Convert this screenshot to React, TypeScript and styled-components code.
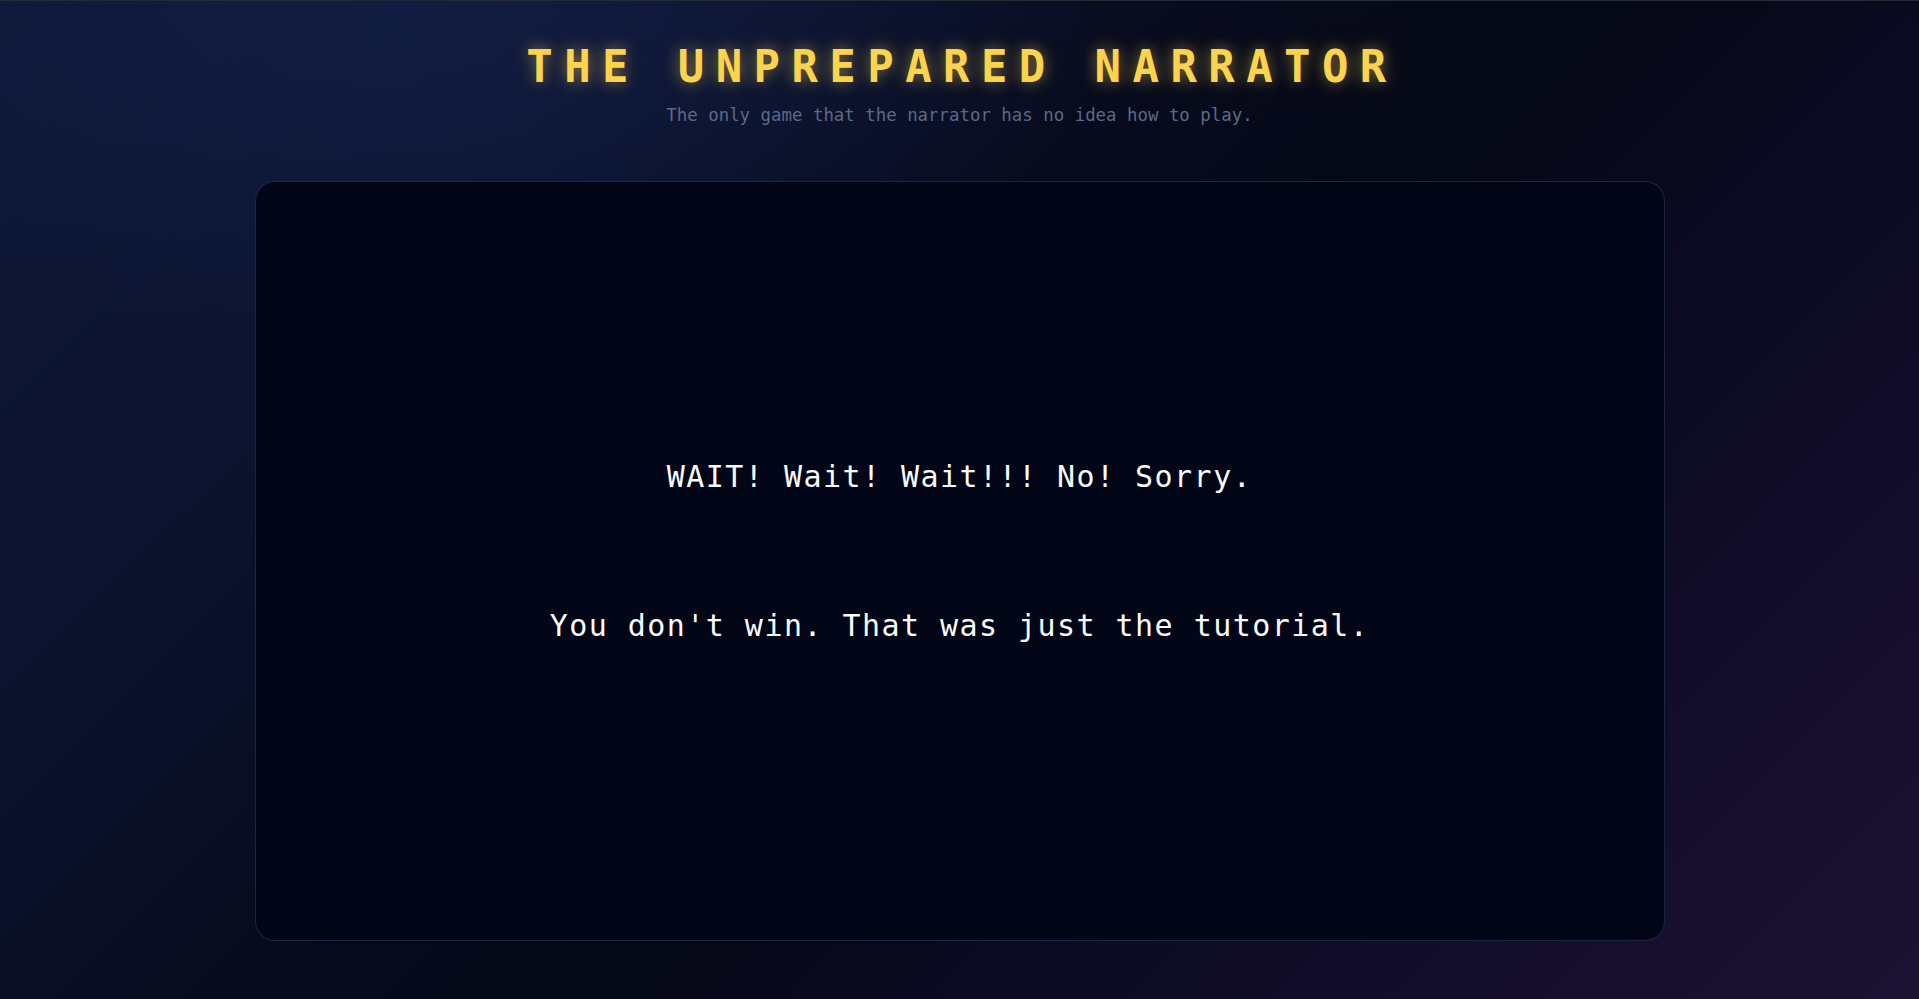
import React from "react";
import styled, { createGlobalStyle } from "styled-components";

const GlobalStyle = createGlobalStyle`
  html, body {
    margin: 0;
    padding: 0;
    height: 100%;
  }
  body {
    font-family: "DejaVu Sans Mono", "Liberation Mono", monospace;
    background: #050816;
  }
  #root {
    height: 100%;
  }
`;

const lines = [
  "WAIT! Wait! Wait!!! No! Sorry.",
  "You don't win. That was just the tutorial.",
];

const App = () => {
  return (
    <>
      <GlobalStyle />
      <Page>
        <Header>
          <Title>THE UNPREPARED NARRATOR</Title>
          <Subtitle>The only game that the narrator has no idea how to play.</Subtitle>
        </Header>
        <Stage>
          {lines.map((line) => (
            <Line key={line}>{line}</Line>
          ))}
        </Stage>
      </Page>
    </>
  );
};

export default App;

const Page = styled.div`
  box-sizing: border-box;
  height: 999px;
  display: flex;
  flex-direction: column;
  align-items: center;
  padding: 44px 0 58px;
  border-top: 1px solid #262a33;
  background:
    radial-gradient(ellipse 1000px 500px at 22% 0%, rgba(24, 38, 88, 0.45), transparent 70%),
    linear-gradient(135deg, #0e1736 0%, #0c1430 22%, #070b1d 42%, #050816 55%, #0b0a22 68%, #1c1233 100%);
`;

const Header = styled.header`
  display: flex;
  flex-direction: column;
  align-items: center;
  gap: 18px;
`;

const Title = styled.h1`
  margin: 0 0 0 5px;
  font-family: "DejaVu Sans Mono", monospace;
  font-size: 44px;
  line-height: 1;
  font-weight: 700;
  letter-spacing: 11.4px;
  color: #fcd34d;
  text-shadow: 0 0 14px rgba(252, 211, 77, 0.45), 0 0 30px rgba(252, 211, 77, 0.2);
`;

const Subtitle = styled.p`
  margin: 0;
  font-family: "DejaVu Sans Mono", monospace;
  font-size: 17.4px;
  line-height: 1;
  color: #5d6987;
`;

const Stage = styled.main`
  box-sizing: border-box;
  margin-top: 57px;
  width: 1410px;
  flex: 1;
  display: flex;
  flex-direction: column;
  align-items: center;
  justify-content: center;
  gap: 119px;
  padding-bottom: 19px;
  background: #020617;
  border: 1px solid rgba(51, 65, 100, 0.55);
  border-radius: 20px;
`;

const Line = styled.p`
  margin: 0;
  font-family: "DejaVu Sans Mono", monospace;
  font-size: 30px;
  line-height: 1;
  letter-spacing: 1.45px;
  color: #f8fafc;
`;
